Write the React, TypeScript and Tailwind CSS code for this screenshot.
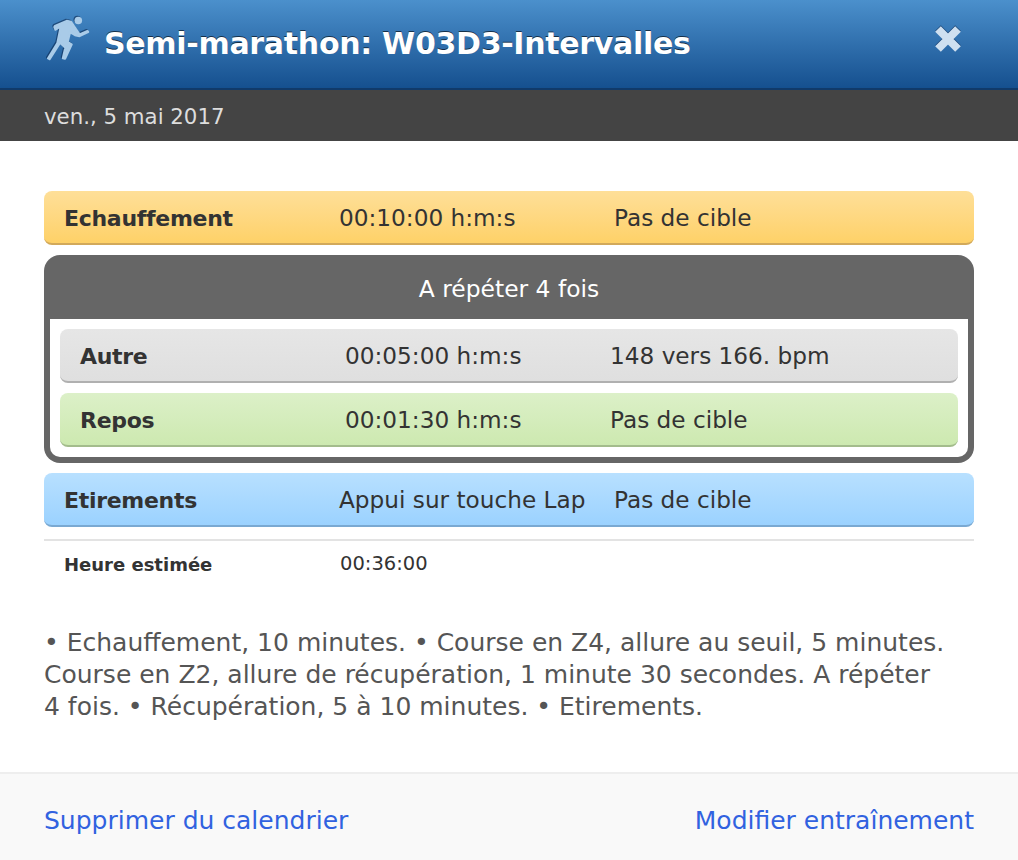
const FONT = "font-['DejaVu_Sans',sans-serif]"

function Step({
  name,
  duration,
  target,
  tone,
  inner = false,
}: {
  name: string
  duration: string
  target: string
  tone: string
  inner?: boolean
}) {
  return (
    <div
      className={`flex h-[54px] items-center rounded-[8px] border-b-2 pl-[20px] pt-[2px] text-[23.2px] text-[#333] ${tone}`}
    >
      <div
        className={`shrink-0 text-[22px] font-bold tracking-[-0.3px] ${inner ? 'w-[265px]' : 'w-[275px]'}`}
      >
        {name}
      </div>
      <div className={`shrink-0 ${inner ? 'w-[265px]' : 'w-[275px]'}`}>{duration}</div>
      <div>{target}</div>
    </div>
  )
}

function Runner() {
  return (
    <svg
      width="44"
      height="50"
      viewBox="46 14 44 50"
      className="mb-[10px] shrink-0 drop-shadow-[-1px_-1px_0_rgba(10,40,80,0.6)]"
    >
      <circle cx="78.3" cy="20.5" r="3.8" fill="#a9cbe8" />
      <path
        d="M55 26 L66.7 21 L71 22 L75 28 L79.5 34.5 L87.5 31.2 L88 32 L79.5 36 L75 35 L70 32 L67.5 42 L71.5 44.5 L65 58.5 L63 58 L65.5 47.5 L60 42.5 L49.5 59 L48.2 58.3 L57.5 43 L61 26 L55.5 29.5 L54.5 27 Z"
        fill="#a9cbe8"
        stroke="#a9cbe8"
        strokeWidth="2.4"
        strokeLinejoin="round"
      />
    </svg>
  )
}

function CloseIcon() {
  return (
    <svg
      width="28"
      height="28"
      viewBox="0 0 28 28"
      className="mb-[10px] shrink-0 drop-shadow-[0_-1px_0_rgba(10,40,80,0.6)]"
    >
      <path d="M4 4 L24 24 M24 4 L4 24" stroke="#cfe0f0" strokeWidth="8" fill="none" />
    </svg>
  )
}

export default function App() {
  return (
    <div className={`flex h-[860px] w-[1018px] flex-col overflow-hidden bg-white ${FONT}`}>
      {/* title bar */}
      <div className="flex h-[90px] shrink-0 items-center border-b-2 border-[#103a6a] bg-gradient-to-b from-[#4b90cc] to-[#15508f] pl-[46px] pr-[56px]">
        <Runner />
        <h1 className="ml-[14px] flex-1 text-[30px] font-bold leading-none tracking-[-0.3px] text-white [text-shadow:0_-1px_0_rgba(0,0,0,0.6)]">
          Semi-marathon: W03D3-Intervalles
        </h1>
        <CloseIcon />
      </div>

      {/* date */}
      <div className="flex h-[51px] shrink-0 items-center bg-[#444] pl-[44px] pt-[2px] text-[21.3px] text-[#ddd]">
        ven., 5 mai 2017
      </div>

      {/* workout */}
      <div className="flex flex-1 flex-col px-[44px] pt-[50px]">
        <Step
          name="Echauffement"
          duration="00:10:00 h:m:s"
          target="Pas de cible"
          tone="border-[#d2a95a] bg-gradient-to-b from-[#fedf98] to-[#fed167]"
        />

        <div className="mt-[10px] h-[208px] rounded-[16px] bg-[#666] p-[6px]">
          <div className="flex h-[58px] items-center justify-center text-[23.4px] text-white">
            A répéter 4 fois
          </div>
          <div className="flex h-[138px] flex-col gap-[10px] rounded-b-[10px] bg-white px-[10px] pt-[10px]">
            <Step
              inner
              name="Autre"
              duration="00:05:00 h:m:s"
              target="148 vers 166. bpm"
              tone="border-[#b0b0b0] bg-gradient-to-b from-[#e6e6e6] to-[#dfdfdf]"
            />
            <Step
              inner
              name="Repos"
              duration="00:01:30 h:m:s"
              target="Pas de cible"
              tone="border-[#a3bc8c] bg-gradient-to-b from-[#dcf0c8] to-[#cde9b0]"
            />
          </div>
        </div>

        <div className="mt-[10px]">
          <Step
            name="Etirements"
            duration="Appui sur touche Lap"
            target="Pas de cible"
            tone="border-[#7aa9d2] bg-gradient-to-b from-[#b8e0ff] to-[#9bd2ff]"
          />
        </div>

        <div className="mt-[12px] flex h-[48px] items-center border-t-2 border-[#e3e3e3] pl-[20px] text-[19.5px] text-[#333]">
          <div className="w-[276px] shrink-0 text-[18px] font-bold">Heure estimée</div>
          <div>00:36:00</div>
        </div>

        <p className="mt-[40px] w-[906px] text-[25px] leading-[32px] text-[#555]">
          • Echauffement, 10 minutes. • Course en Z4, allure au seuil, 5 minutes. Course en Z2, allure de
          récupération, 1 minute 30 secondes. A répéter 4 fois. • Récupération, 5 à 10 minutes. • Etirements.
        </p>
      </div>

      {/* footer */}
      <div className="flex h-[88px] shrink-0 items-center justify-between border-t-2 border-[#eee] bg-[#f9f9f9] px-[44px] pt-[8px] text-[25px] text-[#3162e0]">
        <span>Supprimer du calendrier</span>
        <span>Modifier entraînement</span>
      </div>
    </div>
  )
}
